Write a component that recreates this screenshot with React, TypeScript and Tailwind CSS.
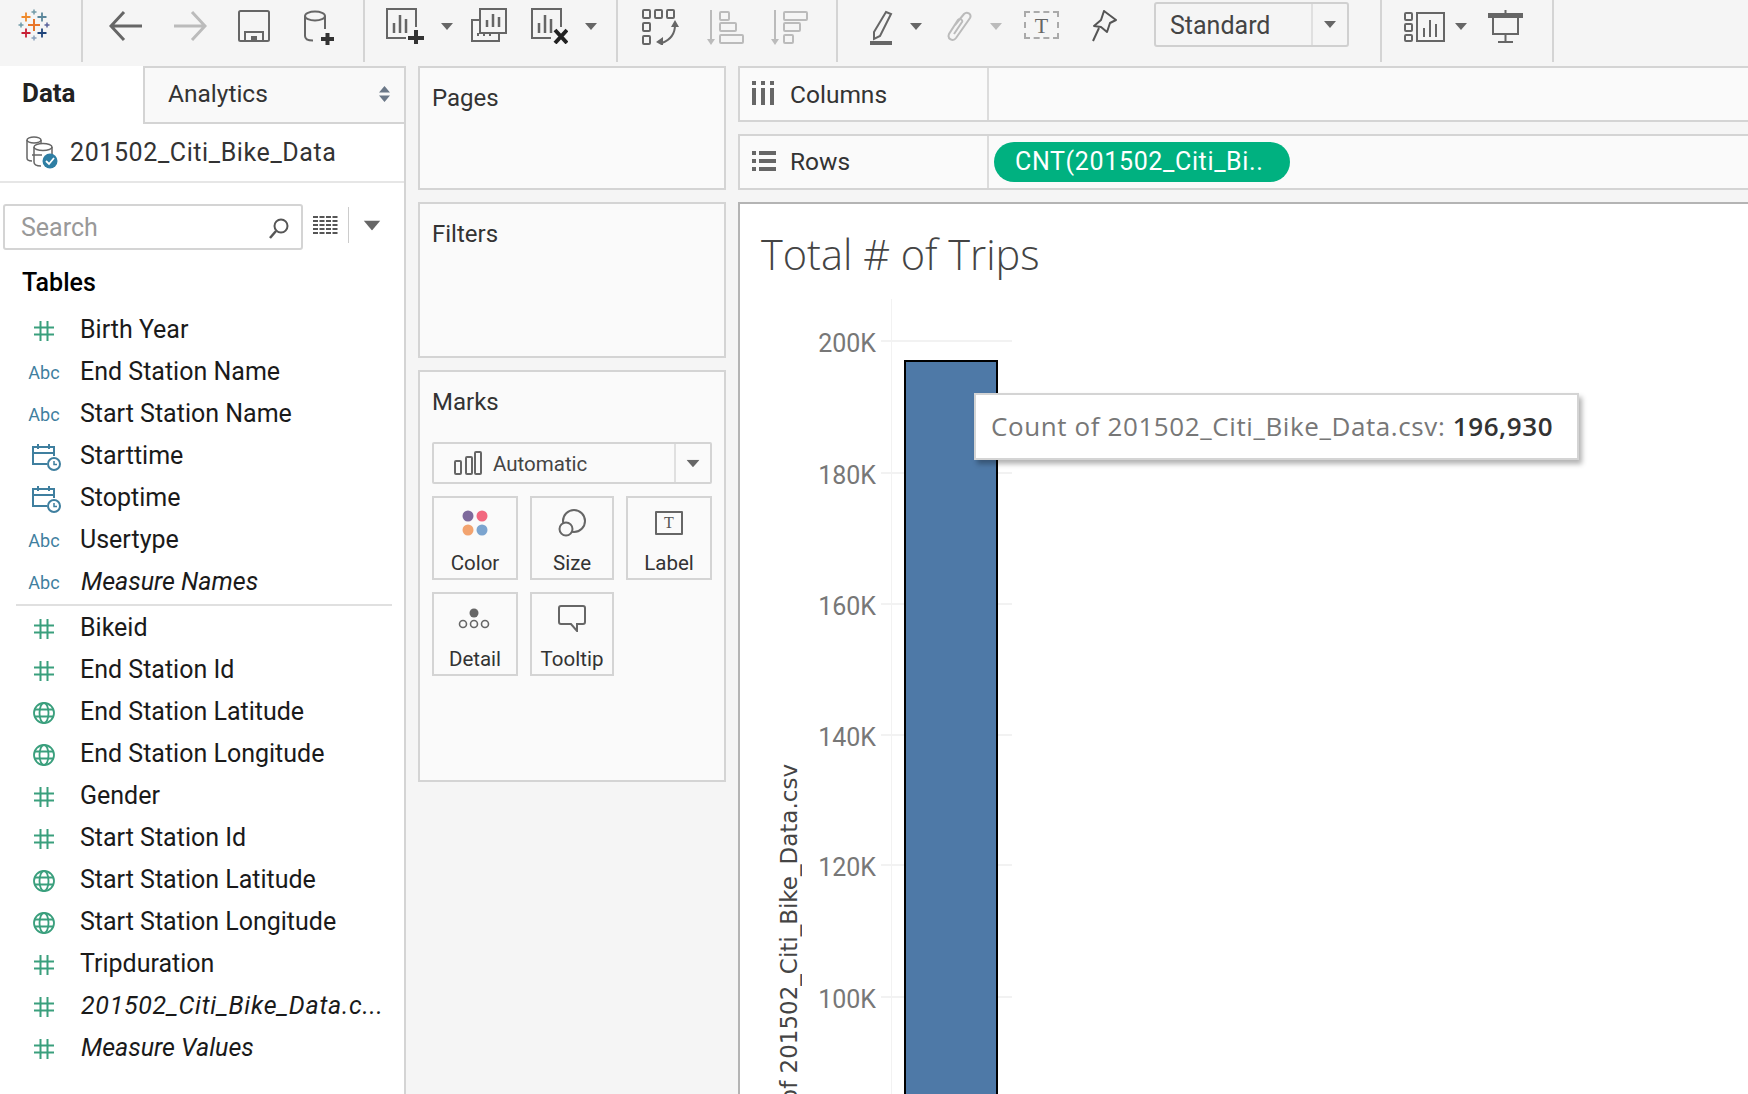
import React from 'react';

const font = "font-['Roboto','Liberation_Sans',sans-serif]";

const Caret: React.FC<{ className?: string; color?: string }> = ({ className = '', color = '#666' }) => (
  <svg width="12" height="7" viewBox="0 0 12 7" className={`shrink-0 ${className}`}>
    <path d="M0 0h12L6 7z" fill={color} />
  </svg>
);

const Plus: React.FC<{ x: number; y: number; r: number; w: number; c: string }> = ({ x, y, r, w, c }) => (
  <path d={`M${x - r} ${y}H${x + r}M${x} ${y - r}V${y + r}`} stroke={c} strokeWidth={w} />
);

const Logo = () => (
  <svg width="36" height="36" viewBox="0 0 36 36" className="shrink-0">
    <Plus x={18} y={17} r={6} w={2} c="#e8762b" />
    <Plus x={10} y={9} r={4.5} w={1.8} c="#ef8a2c" />
    <Plus x={26} y={9} r={4.5} w={1.8} c="#5b879b" />
    <Plus x={18} y={4} r={2.5} w={1.5} c="#7199a6" />
    <Plus x={10} y={25} r={4.5} w={1.8} c="#c72035" />
    <Plus x={26} y={25} r={4.5} w={1.8} c="#1f447b" />
    <Plus x={18} y={30} r={2.5} w={1.5} c="#8aa0bb" />
    <Plus x={5} y={17} r={2.5} w={1.5} c="#6f9aa8" />
    <Plus x={31} y={17} r={2.5} w={1.5} c="#59629b" />
  </svg>
);

const ChartBars = ({ x, y, h = [7, 13, 10] }: { x: number; y: number; h?: number[] }) => (
  <path d={`M${x} ${y}v-${h[0]}M${x + 6} ${y}v-${h[1]}M${x + 12} ${y}v-${h[2]}`} stroke="#666" strokeWidth="2.5" fill="none" />
);

const Toolbar = () => (
  <div className="h-[62px] mb-[4px] flex items-start shrink-0">
    <div className="ml-[16px] mt-[8px]"><Logo /></div>
    <div className="ml-[29px] w-[2px] h-[62px] bg-[#d4d4d4] shrink-0" />
    {/* back / forward */}
    <svg width="34" height="32" viewBox="0 0 34 32" fill="none" className="ml-[26px] mt-[10px] shrink-0">
      <path d="M33 16H3M15 2 2 16l13 14" stroke="#666" strokeWidth="3" />
    </svg>
    <svg width="34" height="32" viewBox="0 0 34 32" fill="none" className="ml-[30px] mt-[10px] shrink-0">
      <path d="M1 16h30M19 2l13 14-13 14" stroke="#bbb" strokeWidth="3" />
    </svg>
    {/* save */}
    <svg width="32" height="32" viewBox="0 0 32 32" fill="none" className="ml-[31px] mt-[10px] shrink-0">
      <rect x="1" y="1" width="30" height="30" rx="1.5" stroke="#666" strokeWidth="2" />
      <path d="M7 31V22h18v9" stroke="#666" strokeWidth="2" />
      <rect x="13" y="26" width="6" height="5" fill="#666" />
    </svg>
    {/* new data source */}
    <svg width="30" height="35" viewBox="0 0 30 35" fill="none" className="ml-[34px] mt-[10px] shrink-0">
      <ellipse cx="11" cy="6" rx="10" ry="4.5" stroke="#666" strokeWidth="2" />
      <path d="M1 6v20c0 3 3 4.5 8 4.5M21 6v13" stroke="#666" strokeWidth="2" />
      <path d="M17 29h13M23.500 23v12" stroke="#333" strokeWidth="4" />
    </svg>
    <div className="ml-[29px] w-[2px] h-[62px] bg-[#d4d4d4] shrink-0" />
    {/* new worksheet */}
    <svg width="38" height="36" viewBox="0 0 38 36" fill="none" className="ml-[21px] mt-[8px] shrink-0">
      <path d="M20 30H1V1h29v18" stroke="#666" strokeWidth="2" />
      <ChartBars x={8} y={25} h={[10, 18, 14]} />
      <path d="M22 30h16M30 22v14" stroke="#333" strokeWidth="4" />
    </svg>
    <Caret className="ml-[17px] mt-[23px]" />
    {/* duplicate */}
    <svg width="36" height="34" viewBox="0 0 36 34" fill="none" className="ml-[18px] mt-[8px] shrink-0">
      <path d="M9 12H1v21h27v-7" stroke="#666" strokeWidth="2" />
      <rect x="9" y="1" width="26" height="24" stroke="#666" strokeWidth="2" />
      <ChartBars x={16} y={19} />
      <path d="M7 28v-3M13 28v-3M19 28v-3" stroke="#666" strokeWidth="2" />
    </svg>
    {/* clear */}
    <svg width="37" height="36" viewBox="0 0 37 36" fill="none" className="ml-[24px] mt-[8px] shrink-0">
      <path d="M20 30H1V1h29v18" stroke="#666" strokeWidth="2" />
      <ChartBars x={8} y={25} h={[10, 18, 14]} />
      <path d="m24 22 12 13M36 22 24 35" stroke="#222" strokeWidth="4" />
    </svg>
    <Caret className="ml-[17px] mt-[23px]" />
    <div className="ml-[19px] w-[2px] h-[62px] bg-[#d4d4d4] shrink-0" />
    {/* swap */}
    <svg width="37" height="36" viewBox="0 0 37 36" fill="none" className="ml-[24px] mt-[9px] shrink-0">
      <g stroke="#666" strokeWidth="2">
        <rect x="1" y="1" width="7" height="8" rx="1" />
        <rect x="13" y="1" width="7" height="8" rx="1" />
        <rect x="25" y="1" width="7" height="8" rx="1" />
        <rect x="1" y="14" width="7" height="8" rx="1" />
        <rect x="1" y="27" width="7" height="8" rx="1" />
        <path d="M33 16c0 9-5 15-13 18" />
      </g>
      <path d="m33 11 4 7h-8zM14 33l7-5v9z" fill="#666" />
    </svg>
    {/* sort ascending */}
    <svg width="37" height="36" viewBox="0 0 37 36" fill="none" className="ml-[28px] mt-[10px] shrink-0">
      <g stroke="#bbb" strokeWidth="2">
        <path d="M4 0v30" />
        <rect x="13" y="2" width="9" height="8" rx="1" />
        <rect x="13" y="13" width="16" height="8" rx="1" />
        <rect x="13" y="25" width="23" height="8" rx="1" />
      </g>
      <path d="M0 29h8l-4 6z" fill="#bbb" />
    </svg>
    {/* sort descending */}
    <svg width="37" height="36" viewBox="0 0 37 36" fill="none" className="ml-[27px] mt-[10px] shrink-0">
      <g stroke="#bbb" strokeWidth="2">
        <path d="M4 0v30" />
        <rect x="13" y="2" width="23" height="8" rx="1" />
        <rect x="13" y="13" width="16" height="8" rx="1" />
        <rect x="13" y="25" width="9" height="8" rx="1" />
      </g>
      <path d="M0 29h8l-4 6z" fill="#bbb" />
    </svg>
    <div className="ml-[28px] w-[2px] h-[62px] bg-[#d4d4d4] shrink-0" />
    {/* highlight */}
    <svg width="23" height="35" viewBox="0 0 23 35" fill="none" className="ml-[32px] mt-[10px] shrink-0">
      <path d="M16 2 21 4 10 26l-6 3 0-7z" stroke="#666" strokeWidth="2" />
      <rect x="0" y="31" width="22" height="4" fill="#666" />
    </svg>
    <Caret className="ml-[17px] mt-[23px]" />
    {/* annotate */}
    <svg width="28" height="32" viewBox="0 0 28 32" fill="none" className="ml-[24px] mt-[11px] shrink-0">
      <path d="M9 14 18 3c3-3 8 0 6 4L10 27c-3 4-9 1-7-4l9-14c2-2 5 0 4 2L8 23" stroke="#bbb" strokeWidth="2" />
    </svg>
    <Caret className="ml-[16px] mt-[23px]" color="#bbb" />
    {/* text box */}
    <div className="ml-[22px] mt-[11px] w-[35px] h-[28px] border-2 border-dashed border-[#aaa] flex items-center justify-center shrink-0 font-['Liberation_Serif',serif] text-[22px] text-[#666]">T</div>
    {/* pin */}
    <svg width="27" height="32" viewBox="0 0 27 32" fill="none" className="ml-[32px] mt-[10px] shrink-0">
      <path d="M13 1l12 9-6 3-3 9-6-5-7-1 7-6z M8 18 2 31" stroke="#555" strokeWidth="2" strokeLinejoin="round" />
    </svg>
    {/* fit */}
    <div className="ml-[36px] mt-[2px] w-[195px] h-[45px] border-2 border-[#d0d0d0] rounded-[3px] flex items-center shrink-0">
      <div className={`flex-1 pl-[14px] pt-[2px] text-[25px] leading-none text-[#444] ${font}`}>Standard</div>
      <div className="w-[36px] h-full border-l-2 border-[#e0e0e0] flex items-center justify-center">
        <Caret />
      </div>
    </div>
    <div className="ml-[31px] w-[2px] h-[62px] bg-[#d4d4d4] shrink-0" />
    {/* show me */}
    <svg width="41" height="30" viewBox="0 0 41 30" fill="none" className="ml-[22px] mt-[12px] shrink-0">
      <g stroke="#666" strokeWidth="2">
        <rect x="1" y="1" width="7" height="7" rx="1" />
        <rect x="1" y="12" width="7" height="7" rx="1" />
        <rect x="1" y="23" width="7" height="6" rx="1" />
        <rect x="13" y="1" width="27" height="28" />
        <path d="M20 25V16M26 25V8M32 25V12" />
      </g>
    </svg>
    <Caret className="ml-[10px] mt-[23px]" />
    {/* presentation */}
    <svg width="35" height="33" viewBox="0 0 35 33" fill="none" className="ml-[21px] mt-[10px] shrink-0">
      <rect x="0" y="3" width="35" height="5" fill="#666" />
      <path d="M17.500 0v4M5 6v18h25V6M17.500 24v8M10 32h15" stroke="#666" strokeWidth="2" />
    </svg>
    <div className="ml-[29px] w-[2px] h-[62px] bg-[#d4d4d4] shrink-0" />
  </div>
);

const HashIcon = () => (
  <svg width="20" height="20" viewBox="0 0 20 20" fill="none">
    <path d="M6.500 0v20M13.500 0v20M0 6.500h20M0 13.500h20" stroke="#3a9f7d" strokeWidth="2" />
  </svg>
);

const AbcIcon = () => <span className="text-[18px] leading-none text-[#3f7f9f]">Abc</span>;

const DateIcon = () => (
  <svg width="29" height="27" viewBox="0 0 29 27" fill="none" className="ml-[5px]">
    <path d="M15 20H1V3h21v9M1 9h21M6 0v5M17 0v5" stroke="#3f7f9f" strokeWidth="2" />
    <circle cx="22" cy="20" r="6" fill="#fff" stroke="#3f7f9f" strokeWidth="2" />
    <path d="M22 17v3.500h3" stroke="#3f7f9f" strokeWidth="1.500" />
  </svg>
);

const GlobeIcon = () => (
  <svg width="22" height="22" viewBox="0 0 22 22" fill="none">
    <g stroke="#3a9f7d" strokeWidth="1.800">
      <circle cx="11" cy="11" r="10" />
      <ellipse cx="11" cy="11" rx="4.500" ry="10" />
      <path d="M1.500 7.500h19M1.500 14.500h19" />
    </g>
  </svg>
);

type Kind = 'num' | 'abc' | 'date' | 'geo';
type Field = { kind: Kind; name: string; italic?: boolean; wide?: boolean };

const DIMENSIONS: Field[] = [
  { kind: 'num', name: 'Birth Year' },
  { kind: 'abc', name: 'End Station Name' },
  { kind: 'abc', name: 'Start Station Name' },
  { kind: 'date', name: 'Starttime' },
  { kind: 'date', name: 'Stoptime' },
  { kind: 'abc', name: 'Usertype' },
  { kind: 'abc', name: 'Measure Names', italic: true },
];

const MEASURES: Field[] = [
  { kind: 'num', name: 'Bikeid' },
  { kind: 'num', name: 'End Station Id' },
  { kind: 'geo', name: 'End Station Latitude' },
  { kind: 'geo', name: 'End Station Longitude' },
  { kind: 'num', name: 'Gender' },
  { kind: 'num', name: 'Start Station Id' },
  { kind: 'geo', name: 'Start Station Latitude' },
  { kind: 'geo', name: 'Start Station Longitude' },
  { kind: 'num', name: 'Tripduration' },
  { kind: 'num', name: '201502_Citi_Bike_Data.c...', italic: true, wide: true },
  { kind: 'num', name: 'Measure Values', italic: true },
];

const FieldRow: React.FC<{ field: Field }> = ({ field }) => (
  <div className="h-[42px] flex items-center">
    <div className="w-[80px] pl-[27px] pr-[19px] flex justify-center items-center shrink-0 pt-[2px]">
      {field.kind === 'num' && <HashIcon />}
      {field.kind === 'abc' && <AbcIcon />}
      {field.kind === 'date' && <DateIcon />}
      {field.kind === 'geo' && <GlobeIcon />}
    </div>
    <span className={`text-[25px] text-[#1a1a1a] whitespace-nowrap ${field.italic ? 'italic ml-[1px]' : ''} ${field.wide ? 'tracking-[0.7px]' : ''}`}>{field.name}</span>
  </div>
);

const DataPane = () => (
  <div className={`w-[406px] shrink-0 bg-white border-r-2 border-[#d4d4d4] flex flex-col ${font}`}>
    <div className="h-[58px] flex shrink-0">
      <div className="w-[143px] pl-[22px] pt-[8px] text-[26px] font-bold text-[#222]">Data</div>
      <div className="flex-1 bg-[#f9f9f9] border-l-2 border-t-2 border-b-2 border-[#d4d4d4] pl-[23px] pb-[2px] flex items-center justify-between pr-[14px] text-[24.500px] text-[#333]">
        <span>Analytics</span>
        <svg width="11" height="16" viewBox="0 0 11 16"><path d="M5.500 0 11 6.500H0zM5.500 16 0 9.500h11z" fill="#6b7888" /></svg>
      </div>
    </div>
    <div className="h-[59px] flex items-center pl-[26px] border-b-2 border-[#e6e6e6] shrink-0">
      <svg width="32" height="33" viewBox="0 0 32 33" fill="none" className="shrink-0">
        <g stroke="#666" strokeWidth="1.500">
          <ellipse cx="8" cy="4" rx="7" ry="3" />
          <path d="M1 4v18c0 2 2 3 5 3M15 4v3" />
          <ellipse cx="17" cy="11" rx="9" ry="3.500" />
          <path d="M8 11v15c0 3 4 4 7 4M26 11v7" />
          <path d="M6 19h10" />
        </g>
        <circle cx="24" cy="25" r="7.500" fill="#2e7ea3" />
        <path d="m20 25 3 3 5-6" stroke="#fff" strokeWidth="1.800" />
      </svg>
      <span className="ml-[12px] text-[25px] tracking-[0.6px] text-[#333]">201502_Citi_Bike_Data</span>
    </div>
    <div className="h-[21px] shrink-0" />
    <div className="flex items-center shrink-0">
      <div className="ml-[3px] w-[300px] h-[46px] border-2 border-[#d4d4d4] rounded-[3px] flex items-center justify-between pl-[16px] pr-[12px] pt-[2px] text-[25px] text-[#999]">
        <span>Search</span>
        <svg width="20" height="21" viewBox="0 0 20 21" fill="none">
          <circle cx="12" cy="8" r="6.500" stroke="#555" strokeWidth="2" />
          <path d="M7 13 1 20" stroke="#555" strokeWidth="2.500" />
        </svg>
      </div>
      <svg width="25" height="20" viewBox="0 0 25 20" className="ml-[10px] mb-[4px] shrink-0">
        <path d="M0 2h25M0 6h25M0 10h25M0 14h25M0 18h25" stroke="#555" strokeWidth="2" strokeDasharray="5 1.500" />
      </svg>
      <div className="ml-[10px] w-[1px] h-[36px] bg-[#ccc] mb-[4px] shrink-0" />
      <Caret className="ml-[17px] mb-[4px] scale-[1.400]" />
    </div>
    <div className="h-[59px] pt-[12px] pl-[22px] text-[25px] font-medium leading-[42px] text-black shrink-0">Tables</div>
    {DIMENSIONS.map((f) => <FieldRow key={f.name} field={f} />)}
    <div className="ml-[16px] mr-[12px] h-[2px] my-[1px] bg-[#e0e0e0] shrink-0" />
    {MEASURES.map((f) => <FieldRow key={f.name} field={f} />)}
  </div>
);

const MarkButton: React.FC<{ label: string; w: string; children: React.ReactNode }> = ({ label, w, children }) => (
  <div className={`${w} h-[84px] border-2 border-[#d4d4d4] flex flex-col items-center shrink-0`}>
    <div className="h-[45px] flex items-center justify-center pt-[4px]">{children}</div>
    <span className="text-[20.500px] leading-[26px] mt-[7px] text-[#333]">{label}</span>
  </div>
);

const CardsColumn = () => (
  <div className={`w-[308px] ml-[12px] shrink-0 flex flex-col gap-[12px] ${font}`}>
    <div className="h-[124px] border-2 border-[#d4d4d4] bg-[#fafafa] px-[12px] pt-[12px] text-[24px] text-[#333]">Pages</div>
    <div className="h-[156px] border-2 border-[#d4d4d4] bg-[#fafafa] px-[12px] pt-[12px] text-[24px] text-[#333]">Filters</div>
    <div className="h-[412px] border-2 border-[#d4d4d4] bg-[#fafafa] px-[12px] pt-[12px] flex flex-col">
      <div className="text-[24px] leading-[36px] text-[#333]">Marks</div>
      <div className="mt-[22px] h-[42px] border-2 border-[#d4d4d4] rounded-[2px] flex items-center">
        <div className="flex-1 flex items-center pl-[20px]">
          <svg width="28" height="24" viewBox="0 0 28 24" fill="none" className="shrink-0">
            <g stroke="#666" strokeWidth="2">
              <rect x="1" y="10" width="6" height="13" rx="1" />
              <rect x="12" y="6" width="6" height="17" rx="1" />
              <rect x="21" y="1" width="6" height="22" rx="1" />
            </g>
          </svg>
          <span className="ml-[11px] pt-[2px] text-[20.500px] text-[#444]">Automatic</span>
        </div>
        <div className="w-[36px] h-full border-l-2 border-[#e0e0e0] flex items-center justify-center">
          <Caret className="scale-[1.100]" />
        </div>
      </div>
      <div className="mt-[12px] flex gap-[12px]">
        <MarkButton label="Color" w="w-[86px]">
          <svg width="26" height="26" viewBox="0 0 26 26" className="ml-[-1px]">
            <circle cx="6" cy="6" r="5.500" fill="#7e6a9c" />
            <circle cx="20" cy="6" r="5.500" fill="#f2687f" />
            <circle cx="6" cy="20" r="5.500" fill="#f2a36f" />
            <circle cx="20" cy="20" r="5.500" fill="#7ba4cf" />
          </svg>
        </MarkButton>
        <MarkButton label="Size" w="w-[84px]">
          <svg width="29" height="28" viewBox="0 0 29 28" fill="none">
            <g stroke="#666" strokeWidth="2">
              <circle cx="16" cy="12" r="11" />
              <circle cx="8" cy="20" r="6.500" fill="#fafafa" />
            </g>
          </svg>
        </MarkButton>
        <MarkButton label="Label" w="w-[86px]">
          <div className="w-[28px] h-[24px] border-2 border-[#666] rounded-[1px] flex items-center justify-center font-['Liberation_Serif',serif] text-[16px] leading-none text-[#555]">T</div>
        </MarkButton>
      </div>
      <div className="mt-[12px] flex gap-[12px]">
        <MarkButton label="Detail" w="w-[86px]">
          <svg width="32" height="22" viewBox="0 0 32 22" fill="none" className="ml-[-2px]">
            <circle cx="16" cy="5" r="4.500" fill="#666" />
            <g stroke="#666" strokeWidth="1.600">
              <circle cx="5" cy="16" r="3.500" />
              <circle cx="16" cy="16" r="3.500" />
              <circle cx="27" cy="16" r="3.500" />
            </g>
          </svg>
        </MarkButton>
        <MarkButton label="Tooltip" w="w-[84px]">
          <svg width="28" height="27" viewBox="0 0 28 27" fill="none">
            <path d="M3 1h22a2 2 0 0 1 2 2v14a2 2 0 0 1-2 2h-6v7l-6-7H3a2 2 0 0 1-2-2V3a2 2 0 0 1 2-2z" stroke="#666" strokeWidth="2" />
          </svg>
        </MarkButton>
      </div>
    </div>
  </div>
);

const ShelfRow: React.FC<{ label: string; icon: React.ReactNode; children?: React.ReactNode; h: string; labelClass: string }> = ({ label, icon, children, h, labelClass }) => (
  <div className={`${h} shrink-0 border-y-2 border-l-2 border-[#d4d4d4] bg-[#fafafa] flex`}>
    <div className="w-[249px] border-r-2 border-[#dcdcdc] flex items-center pl-[12px] shrink-0">
      {icon}
      <span className={`text-[24.500px] text-[#333] ${labelClass}`}>{label}</span>
    </div>
    <div className="flex-1 flex items-center pl-[5px]">{children}</div>
  </div>
);

const TICKS = [
  { label: '200K', y: 342 },
  { label: '180K', y: 474 },
  { label: '160K', y: 605 },
  { label: '140K', y: 736 },
  { label: '120K', y: 866 },
  { label: '100K', y: 998 },
];

const Chart = () => (
  <div className="relative flex-1 bg-white border-t-2 border-l-2 border-[#b4b4b4] overflow-hidden mt-[12px]">
    <div className="pl-[21px] pt-[24px] font-['Open_Sans',sans-serif] font-light text-[41.500px] leading-[52px] text-[#444]">Total # of Trips</div>
    <div className="absolute left-[151px] top-[95px] bottom-0 w-[1px] bg-[#f2f2f2]" />
    {TICKS.map((t) => (
      <div key={t.label} className="absolute left-0 flex items-center h-[30px]" style={{ top: t.y - 220 }}>
        <span className={`w-[136px] pt-[6px] text-right text-[25px] text-[#777] ${font}`}>{t.label}</span>
        <div className="ml-[5px] w-[131px] h-[2px] bg-[#f2f2f2]" />
      </div>
    ))}
    <div className="absolute left-[164px] top-[156px] bottom-[-10px] w-[94px] bg-[#4e79a7] border-2 border-black" />
    <div className="absolute left-[36px] top-[560px] [writing-mode:vertical-rl] rotate-180 whitespace-nowrap font-['DejaVu_Sans',sans-serif] text-[23px] leading-[26px] text-[#444]">
      Count of 201502_Citi_Bike_Data.csv
    </div>
    <div className="absolute left-[234px] top-[189px] w-[605px] h-[67px] bg-white border-2 border-[#d4d4d4] shadow-[3px_4px_5px_rgba(0,0,0,0.3)] flex items-center pl-[15px] whitespace-nowrap font-['Open_Sans',sans-serif] text-[26px] tracking-[0.6px] text-[#777]">
      Count of 201502_Citi_Bike_Data.csv:&nbsp;<b className="font-semibold text-[#333]">196,930</b>
    </div>
  </div>
);

const VizColumn = () => (
  <div className={`flex-1 min-w-0 ml-[12px] flex flex-col ${font}`}>
    <ShelfRow
      label="Columns"
      labelClass="ml-[16px] pt-[2px]"
      h="h-[56px]"
      icon={
        <svg width="22" height="24" viewBox="0 0 22 24" className="shrink-0 mb-[3px]" fill="#666">
          <path d="M0 7h4v17H0zM9 7h4v17H9zM18 7h4v17h-4zM0 0h4v4H0zM9 0h4v4H9zM18 0h4v4h-4z" />
        </svg>
      }
    />
    <div className="h-[12px] shrink-0" />
    <ShelfRow
      label="Rows"
      labelClass="ml-[14px]"
      h="h-[56px]"
      icon={
        <svg width="24" height="20" viewBox="0 0 24 20" className="shrink-0 mb-[2px]" fill="#666">
          <path d="M0 0h4v4H0zM7 0h17v4H7zM0 8h4v4H0zM7 8h17v4H7zM0 16h4v4H0zM7 16h17v4H7z" />
        </svg>
      }
    >
      <div className="w-[296px] h-[40px] rounded-[20px] bg-[#00b180] flex items-center pl-[21px] text-[25px] tracking-[0.65px] text-white whitespace-nowrap">CNT(201502_Citi_Bi..</div>
    </ShelfRow>
    <Chart />
  </div>
);

export default function App() {
  return (
    <div className="w-[1748px] h-[1094px] overflow-hidden bg-[#f5f5f5] flex flex-col">
      <Toolbar />
      <div className="flex-1 min-h-0 flex items-stretch">
        <DataPane />
        <CardsColumn />
        <VizColumn />
      </div>
    </div>
  );
}
